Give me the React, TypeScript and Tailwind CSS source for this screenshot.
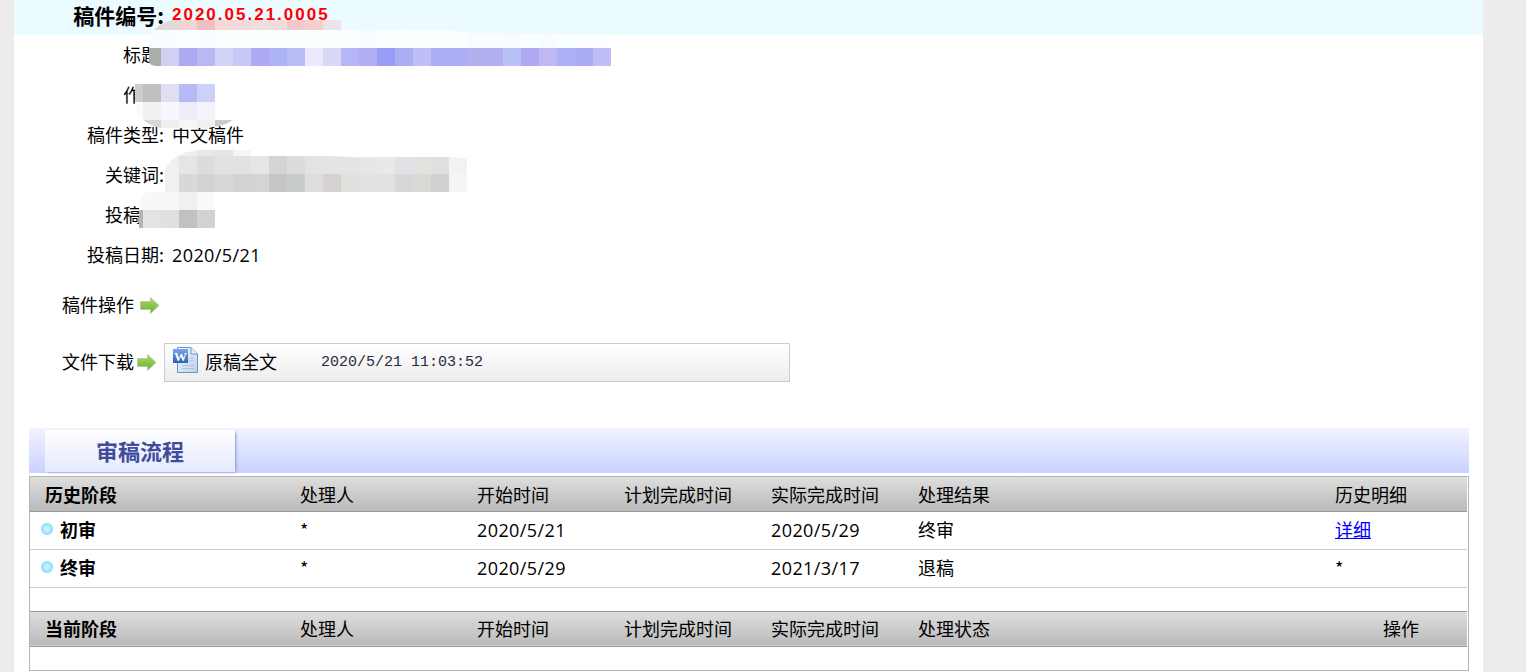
import React from "react";

type Band = { x: number; y: number; h: number; colors: string[] };

const titleRow = ["#d2d0f1","#aaaaf3","#b9b9f2","#d4d4f9","#c6c9f6","#aeaaf6","#aeb2f6","#b9bdf5","#ebe9fb","#d9d8f6","#b5b6f6","#b2aef2","#9a9cf5","#aaaef3","#c0bef6","#abaef5","#abaef5","#b3b0f0","#b2aef2","#bac2f5","#b0aaf3","#bfb8f3","#aeb0f6","#acacf5","#bfbff8"];

const titleBands: Band[] = [
  { x: 143, y: 20, h: 10, colors: ["#d8d8d8","#e4d8d8","#f2d4d6","#f0bfc0","#f3d9da","#f2dadc","#f0dee0","#f0dcde","#f2c8ca","#f3cfd0","#ece4ea"] },
  { x: 143, y: 30, h: 18, colors: ["#f9fdff","#f9fdff","#f9feff","#f8fdff","#f9feff","#f9feff","#f9feff","#f9feff","#f9feff","#f9feff","#f9feff","#f9feff","#f8fcff","#f9feff","#fbffff","#f9feff","#f9feff","#fafeff","#f8fbff","#f9fcff","#f8fbff","#f9feff","#f9fcff","#f9feff","#fafeff","#fbffff"] },
  { x: 143, y: 48, h: 18, colors: ["#a9aea9", ...titleRow] },
];

const authorBands: Band[] = [
  { x: 125, y: 84, h: 18, colors: ["#cdcdcd","#bfbfbf","#e0def3","#b5baf5","#cfd0f8"] },
  { x: 125, y: 102, h: 18, colors: ["#fafafa","#f1f1f1","#f7f7fd","#ededfa","#f3f3fc"] },
  { x: 125, y: 120, h: 10, colors: ["#d8d8d8","#d8d8d8","#efefef","#f6f6f6","#f0f0f0","#cccccc"] },
];

const keywordBands: Band[] = [
  { x: 161, y: 150, h: 6, colors: ["#f4f4f4","#efefef","#e8e8e8","#e4e4e8","#f4f6f6"] },
  { x: 161, y: 156, h: 18, colors: ["#f0f0f0","#e5e5e3","#dcdcdc","#e2e2e4","#e2e2e2","#e6e6e4","#d4d4d4","#dcdcde","#e3e3e4","#e4e4e4","#e4e4e4","#e6e6e6","#e9e9e8","#e1e2e6","#e2e1de","#dfdfe1","#f2f2f2"] },
  { x: 161, y: 174, h: 18, colors: ["#f0f0f0","#d8d8d8","#d3d3d5","#d8d8da","#d3d3d5","#d4d4d2","#c6c6c6","#c8cccc","#dedede","#d6d2d2","#dfe1dd","#e2e2e2","#e2e2e2","#d6d7d9","#dbd9d6","#d1d1d1","#f5f5f5"] },
];

const submitterBands: Band[] = [
  { x: 125, y: 192, h: 18, colors: ["#fafafa","#f8f8f8","#f6f6f6","#eff1f1","#fafafa"] },
  { x: 125, y: 210, h: 18, colors: ["#b4b4b8","#e3e3e4","#e2e0de","#c0c2c2","#d1d2d4"] },
];

function Bands({ bands, clip }: { bands: Band[]; clip: string }) {
  return (
    <g clipPath={`url(#${clip})`}>
      {bands.map((b) =>
        b.colors.map((c, i) => <rect key={`${b.y}-${i}`} x={b.x + i * 18} y={b.y} width={18} height={b.h} fill={c} />)
      )}
    </g>
  );
}

function Mosaics() {
  return (
    <svg className="absolute left-0 top-0 pointer-events-none" width={1526} height={672} viewBox="0 0 1526 672">
      <defs>
        <clipPath id="m-title">
          <path d="M149 66 L149 44 Q150 26 172 20 L341 20 L341 30 L430 30 Q455 30 470 33 L590 35 Q612 36 618 48 L611 48 L611 66 L158 66 Q150 66 149 62 Z" />
        </clipPath>
        <clipPath id="m-author">
          <path d="M135 84 L215 84 L215 120 L233 120 Q222 128 200 128 L165 128 Q145 128 135 108 Z" />
        </clipPath>
        <clipPath id="m-keyword">
          <path d="M165 192 L165 170 Q172 152 200 150 L250 150 L253 156 L330 156 Q360 158 380 157 L450 157 L467 159 L467 192 Z" />
        </clipPath>
        <clipPath id="m-submitter">
          <path d="M139 228 L139 205 Q142 192 150 190 L215 192 L215 228 Z" />
        </clipPath>
      </defs>
      <Bands bands={titleBands} clip="m-title" />
      <Bands bands={authorBands} clip="m-author" />
      <Bands bands={keywordBands} clip="m-keyword" />
      <Bands bands={submitterBands} clip="m-submitter" />
    </svg>
  );
}

function GreenArrow() {
  return (
    <svg width={21} height={19} viewBox="0 0 21 19">
      <defs>
        <linearGradient id="ga" x1="0" y1="0" x2="0" y2="1">
          <stop offset="0" stopColor="#acdc62" />
          <stop offset="1" stopColor="#6cae2e" />
        </linearGradient>
      </defs>
      <path d="M1.5 5.5 H11.5 V1.5 L20 9.5 L11.5 17.5 V13.5 H1.5 Z" fill="url(#ga)" stroke="#b9c9a6" strokeWidth="1" strokeLinejoin="round" />
    </svg>
  );
}

function WordIcon() {
  return (
    <svg width={25} height={26} viewBox="0 0 25 26">
      <defs>
        <linearGradient id="wd" x1="0" y1="0" x2="1" y2="1">
          <stop offset="0" stopColor="#f6f9fe" />
          <stop offset="1" stopColor="#bdd1ec" />
        </linearGradient>
        <linearGradient id="wb" x1="0" y1="0" x2="0" y2="1">
          <stop offset="0" stopColor="#7ba6ea" />
          <stop offset="1" stopColor="#2f5fba" />
        </linearGradient>
      </defs>
      <path d="M4.5 0.5 H18 L24.5 7 V25.5 H4.5 Z" fill="url(#wd)" stroke="#6f93c6" strokeWidth="1" />
      <path d="M18 0.5 V7 H24.5" fill="#e7effa" stroke="#6f93c6" strokeWidth="1" />
      <path d="M16 11 H21 M16 14 H21 M9 18.5 H21 M9 21.5 H21" stroke="#a9c2e2" strokeWidth="1" />
      <rect x="0" y="2" width="15" height="14" fill="url(#wb)" />
      <text x="7.5" y="14" textAnchor="middle" fontSize="13" fontWeight="700" fill="#ffffff" fontFamily="Liberation Serif, serif">W</text>
    </svg>
  );
}

function Bullet() {
  return <span className="inline-block h-[12px] w-[12px] shrink-0 rounded-full bg-[radial-gradient(circle_at_50%_50%,#d2f5ff_0%,#a6e9ff_45%,#52c9f2_100%)]" />;
}

function InfoRow({ label, children }: { label: string; children?: React.ReactNode }) {
  return (
    <div className="flex h-[40px] items-center pb-[2px]">
      <div className="w-[150px] text-right">{label}</div>
      <div className="ml-[8px]">{children}</div>
    </div>
  );
}

const num = "font-['Open_Sans',sans-serif] tracking-[0.4px]";
const thHead = "bg-gradient-to-b from-[#dedede] to-[#bababa] border-b border-[#999999] text-left align-middle";

function HeadRow({ first, sixth, last, center, tall }: { first: string; sixth: string; last: string; center?: boolean; tall?: boolean }) {
  const cell = `${thHead} ${tall ? "h-[35px] pb-[2px]" : "h-[34px]"}`;
  return (
    <tr>
      <th className={`${cell} pl-[15px] font-bold`}>{first}</th>
      <th className={`${cell} font-normal`}>处理人</th>
      <th className={`${cell} font-normal`}>开始时间</th>
      <th className={`${cell} font-normal`}>计划完成时间</th>
      <th className={`${cell} font-normal`}>实际完成时间</th>
      <th className={`${cell} font-normal`}>{sixth}</th>
      <th className={`${cell} font-normal ${center ? "!text-center" : ""}`}>{last}</th>
    </tr>
  );
}

function DataRow({ stage, start, end, result, last }: { stage: string; start: string; end: string; result: string; last: React.ReactNode }) {
  const td = "h-[38px] border-b border-[#cccccc] align-middle pb-[2px]";
  return (
    <tr>
      <td className={`${td} pl-[11px]`}>
        <div className="flex items-center gap-[7px]">
          <Bullet />
          <b className="font-bold">{stage}</b>
        </div>
      </td>
      <td className={td}>*</td>
      <td className={td}><span className={num}>{start}</span></td>
      <td className={td}></td>
      <td className={td}><span className={num}>{end}</span></td>
      <td className={td}>{result}</td>
      <td className={td}>{last}</td>
    </tr>
  );
}

export default function App() {
  return (
    <div className="relative h-[672px] w-[1526px] overflow-hidden bg-[#ececec] pl-[14px] font-['Noto_Sans_CJK_SC',sans-serif] text-[18px] leading-[24px] text-black">
      <div className="h-full w-[1469px] bg-white">
        <div className="flex h-[35px] items-center bg-[#ebfbff] pb-[5px]">
          <div className="w-[150px] text-right text-[21px] font-bold">稿件编号:</div>
          <div className="ml-[8px] font-['Liberation_Sans',sans-serif] text-[17px] font-bold tracking-[2px] text-[#ff0000]">2020.05.21.0005</div>
        </div>
        <InfoRow label="标题:" />
        <InfoRow label="作者:" />
        <InfoRow label="稿件类型:">中文稿件</InfoRow>
        <InfoRow label="关键词:" />
        <InfoRow label="投稿人:" />
        <InfoRow label="投稿日期:"><span className={num}>2020/5/21</span></InfoRow>

        <div className="mt-[10px] flex h-[40px] items-center pl-[48px]">
          <span className="-mt-[2px]">稿件操作</span>
          <span className="ml-[5px] flex"><GreenArrow /></span>
        </div>

        <div className="mt-[18px] flex h-[39px] items-center pl-[48px]">
          <span className="-mt-[3px]">文件下载</span>
          <span className="ml-[2px] flex"><GreenArrow /></span>
          <div className="ml-[7px] flex h-[39px] w-[626px] items-center border border-[#cccccc] bg-gradient-to-b from-white to-[#ececec] pl-[8px]">
            <span className="-mt-[5px] flex"><WordIcon /></span>
            <span className="-mt-[3px] ml-[7px]">原稿全文</span>
            <span className="ml-[44px] mt-[1px] font-['Liberation_Mono',monospace] text-[15px] text-[#2a2a40]">2020/5/21 11:03:52</span>
          </div>
        </div>

        <div className="ml-[15px] mt-[46px] flex h-[45px] w-[1440px] items-end bg-gradient-to-b from-[#f2f4ff] to-[#c8d2fe] pl-[16px]">
          <div className="mb-[1px] flex h-[42px] w-[190px] items-center justify-center rounded-t-[2px] bg-gradient-to-b from-white to-[#e4e9fc] pb-[3px] text-[22px] font-bold text-[#3f4c9e] shadow-[2px_1px_3px_-1px_#8a93c0]">
            审稿流程
          </div>
        </div>

        <div className="ml-[15px] mt-[3px] h-[195px] w-[1440px] border border-[#b4b4b4] pr-[1px]">
          <table className="w-full table-fixed border-collapse">
            <colgroup>
              <col className="w-[270px]" />
              <col className="w-[177px]" />
              <col className="w-[147px]" />
              <col className="w-[147px]" />
              <col className="w-[147px]" />
              <col className="w-[417px]" />
              <col />
            </colgroup>
            <tbody>
              <HeadRow first="历史阶段" sixth="处理结果" last="历史明细" />
              <DataRow stage="初审" start="2020/5/21" end="2020/5/29" result="终审" last={<a className="text-[#0000ff] underline">详细</a>} />
              <DataRow stage="终审" start="2020/5/29" end="2021/3/17" result="退稿" last="*" />
              <tr><td colSpan={7} className="h-[24px] border-b border-[#999999]"></td></tr>
              <HeadRow first="当前阶段" sixth="处理状态" last="操作" center tall />
            </tbody>
          </table>
        </div>
      </div>
      <Mosaics />
    </div>
  );
}
